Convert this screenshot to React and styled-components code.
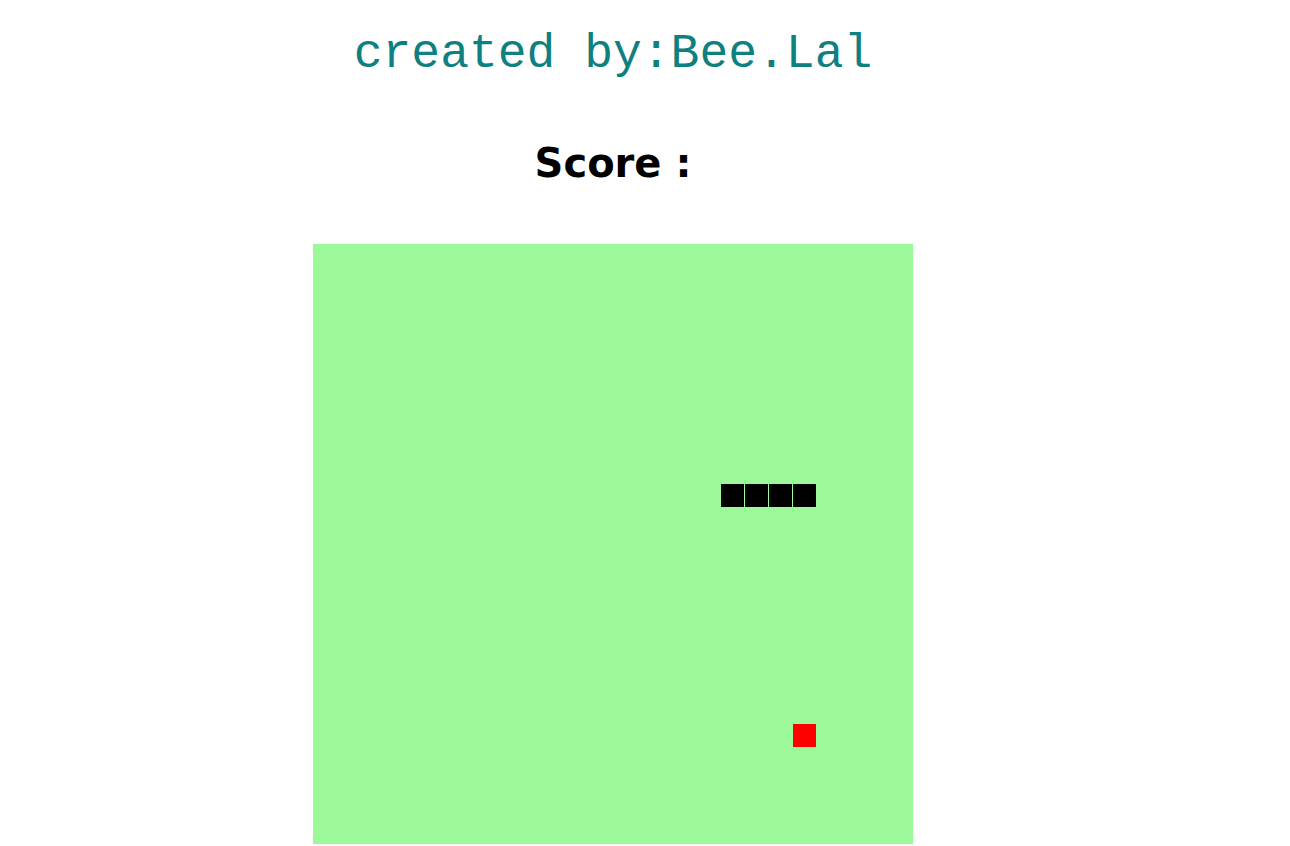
import React from 'react';
import styled, { createGlobalStyle } from 'styled-components';

const GlobalStyle = createGlobalStyle`
  body {
    margin: 8px;
    background: #ffffff;
  }
`;

const Page = styled.div`
  width: 1210px;
  display: flex;
  flex-direction: column;
  align-items: center;
`;

const Credit = styled.h1`
  margin: 18px 0 0;
  font-family: 'Liberation Mono', 'Courier New', monospace;
  font-weight: normal;
  font-size: 48px;
  line-height: 56px;
  color: #0f8080;
`;

const Score = styled.h2`
  margin: 57px 0 0;
  font-family: 'Comic Sans MS', 'DejaVu Sans', sans-serif;
  font-weight: bold;
  font-size: 40px;
  line-height: 48px;
  color: #000000;
`;

const Board = styled.div`
  margin-top: 57px;
  width: 600px;
  height: 600px;
  background: #9cf99a;
  display: grid;
  grid-template-columns: repeat(25, 24px);
  grid-template-rows: repeat(25, 24px);
`;

const Cell = styled.div`
  width: 23px;
  height: 23px;
  background: ${props => (props.food ? '#ff0000' : '#000000')};
  grid-column: ${props => props.x + 1};
  grid-row: ${props => props.y + 1};
`;

const snake = [
  { x: 17, y: 10 },
  { x: 18, y: 10 },
  { x: 19, y: 10 },
  { x: 20, y: 10 },
];

const food = { x: 20, y: 20 };

export default function App() {
  return (
    <>
      <GlobalStyle />
      <Page>
        <Credit>created by:Bee.Lal</Credit>
        <Score>Score :</Score>
        <Board>
          {snake.map(part => (
            <Cell key={`${part.x}-${part.y}`} x={part.x} y={part.y} />
          ))}
          <Cell food x={food.x} y={food.y} />
        </Board>
      </Page>
    </>
  );
}
